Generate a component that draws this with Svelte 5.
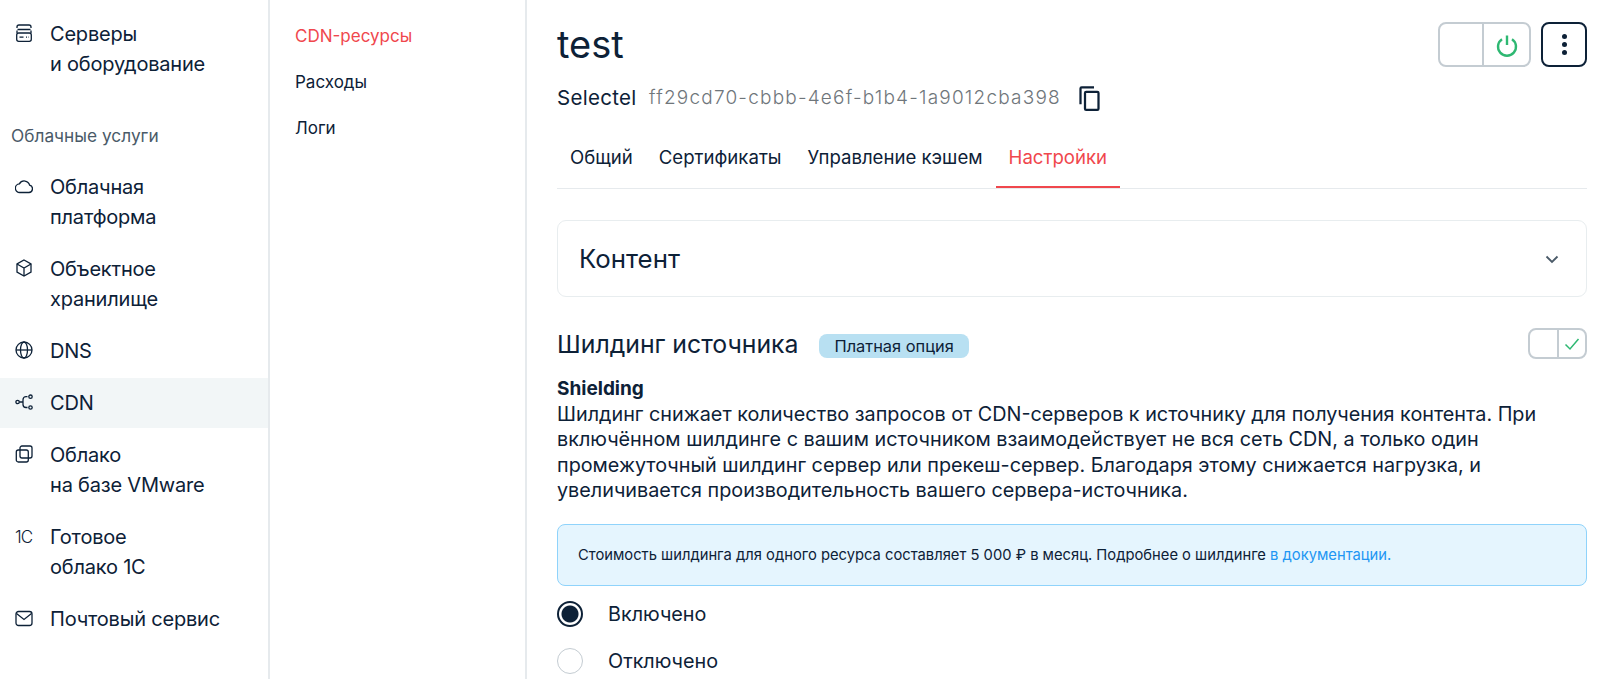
<script>
  const menu = [
    { icon: 'cloud', lines: ['Облачная', 'платформа'] },
    { icon: 'box', lines: ['Объектное', 'хранилище'] },
    { icon: 'globe', lines: ['DNS'] },
    { icon: 'cdn', lines: ['CDN'], active: true },
    { icon: 'vmware', lines: ['Облако', 'на базе VMware'] },
    { icon: '1c', lines: ['Готовое', 'облако 1С'] },
    { icon: 'mail', lines: ['Почтовый сервис'] }
  ];
  const tabs = ['Общий', 'Сертификаты', 'Управление кэшем', 'Настройки'];
  const subnav = ['CDN-ресурсы', 'Расходы', 'Логи'];
</script>

{#snippet icon(name)}
  {#if name === 'server'}
    <svg viewBox="0 0 18 18" class="ico">
      <path d="M2 4V3a2 2 0 0 1 2-2h10a2 2 0 0 1 2 2v1" />
      <path d="M2 9V6.500M16 9V6.500M2.500 5.500h13" />
      <rect x="1.700" y="9" width="14.600" height="8.300" rx="2" />
      <path d="M4.500 13.200h4M11 13.200h1M13.500 13.200h.5" />
    </svg>
  {:else if name === 'cloud'}
    <svg viewBox="0 0 18 18" class="ico">
      <path d="M5 15.500a4.300 4.300 0 0 1-.6-8.600 5.500 5.500 0 0 1 10.200 1.300 3.700 3.700 0 0 1-.6 7.300z" />
    </svg>
  {:else if name === 'box'}
    <svg viewBox="0 0 18 18" class="ico">
      <path d="M9 1l7 4v8l-7 4-7-4V5z" />
      <path d="M2 5l7 4 7-4M9 9v8" />
    </svg>
  {:else if name === 'globe'}
    <svg viewBox="0 0 18 18" class="ico">
      <circle cx="9" cy="9" r="8" />
      <ellipse cx="9" cy="9" rx="3.500" ry="8" />
      <path d="M1 9h16" />
    </svg>
  {:else if name === 'cdn'}
    <svg viewBox="0 0 18 18" class="ico">
      <circle cx="2.600" cy="9" r="1.700" />
      <circle cx="15.500" cy="3.700" r="1.700" />
      <circle cx="15.500" cy="14.500" r="1.700" />
      <path d="M4.300 9h3.700M12.500 3.700h-1.500a3 3 0 0 0-3 3v4.800a3 3 0 0 0 3 3h1.500" />
    </svg>
  {:else if name === 'vmware'}
    <svg viewBox="0 0 18 18" class="ico">
      <rect x="5" y="1" width="12" height="12" rx="2" />
      <rect x="1.300" y="5" width="12" height="12" rx="2" />
    </svg>
  {:else if name === 'mail'}
    <svg viewBox="0 0 18 18" class="ico">
      <rect x="1" y="2.500" width="16" height="14" rx="2.500" />
      <path d="M1.500 4.500L9 10.500l7.500-6" />
    </svg>
  {:else}
    <span class="one-c">1C</span>
  {/if}
{/snippet}

<div class="page">
  <aside class="sidebar">
    <a class="item" href="#s">
      {@render icon('server')}
      <span>Серверы<br />и оборудование</span>
    </a>
    <div class="group">Облачные услуги</div>
    <div class="items">
      {#each menu as m}
        <a class="item" class:active={m.active} href="#m">
          {@render icon(m.icon)}
          <span>
            {#each m.lines as line, i}
              {#if i > 0}<br />{/if}{line}
            {/each}
          </span>
        </a>
      {/each}
    </div>
  </aside>

  <nav class="subnav">
    {#each subnav as s, i}
      <a href="#n" class:current={i === 0}>{s}</a>
    {/each}
  </nav>

  <main class="content">
    <header class="head">
      <h1>test</h1>
      <div class="actions">
        <div class="switch big">
          <span></span>
          <span>
            <svg viewBox="0 0 24 24" width="24" height="24" class="power">
              <path d="M7 6.200a9 9 0 1 0 10 0" />
              <path d="M12 2.500v9.500" />
            </svg>
          </span>
        </div>
        <button class="more" aria-label="Ещё">
          <i></i><i></i><i></i>
        </button>
      </div>
    </header>

    <div class="meta">
      <span class="provider">Selectel</span>
      <span class="uuid">ff29cd70-cbbb-4e6f-b1b4-1a9012cba398</span>
      <svg viewBox="0 0 24 24" width="27" height="27" class="copy">
        <path d="M16 2H5a2 2 0 0 0-2 2v14h2V4h11z" />
        <path fill-rule="evenodd" d="M19 6H9a2 2 0 0 0-2 2v14a2 2 0 0 0 2 2h10a2 2 0 0 0 2-2V8a2 2 0 0 0-2-2zm0 16H9V8h10z" />
      </svg>
    </div>

    <div class="tabs">
      {#each tabs as t, i}
        <a href="#t" class:selected={i === 3}>{t}</a>
      {/each}
    </div>

    <section class="accordion">
      <h2>Контент</h2>
      <svg viewBox="0 0 14 14" width="14" height="14" class="chevron">
        <path d="M1.500 4.500L7 10l5.500-5.500" />
      </svg>
    </section>

    <div class="option-head">
      <h2 class="option-title">Шилдинг источника</h2>
      <span class="badge">Платная опция</span>
      <div class="switch small">
        <span></span>
        <span>
          <svg viewBox="0 0 16 16" width="16" height="16" class="check">
            <path d="M1.500 8.500L6 13 14.500 3" />
          </svg>
        </span>
      </div>
    </div>

    <div class="description">
      <b>Shielding</b>
      <p>Шилдинг снижает количество запросов от CDN-серверов к источнику для получения контента. При включённом шилдинге с вашим источником взаимодействует не вся сеть CDN, а только один промежуточный шилдинг сервер или прекеш-сервер. Благодаря этому снижается нагрузка, и увеличивается производительность вашего сервера-источника.</p>
    </div>

    <div class="notice">
      Стоимость шилдинга для одного ресурса составляет 5 000 ₽ в месяц. Подробнее о шилдинге <a href="#d">в документации.</a>
    </div>

    <div class="radios">
      <label class="radio"><span class="dot on"></span>Включено</label>
      <label class="radio"><span class="dot"></span>Отключено</label>
    </div>
  </main>
</div>

<style>
  :global(body) {
    overflow: hidden;
    background: #fff;
  }

  .page {
    display: flex;
    height: 100vh;
    overflow: hidden;
    font-family: Inter, "Noto Sans", sans-serif;
    color: #0d2137;
  }

  a {
    color: inherit;
    text-decoration: none;
  }

  .sidebar {
    width: 270px;
    flex: none;
    box-sizing: border-box;
    padding-top: 9px;
    border-right: 2px solid #e6eaed;
  }

  .items {
    display: flex;
    flex-direction: column;
    gap: 2px;
  }

  .item {
    display: flex;
    gap: 17px;
    padding: 10px 10px 10px 15px;
    font-size: 20px;
    line-height: 30px;
    letter-spacing: -0.2px;
  }

  .item.active {
    background: #f2f6f7;
  }

  .ico {
    width: 18px;
    height: 18px;
    margin-top: 5px;
    flex: none;
    fill: none;
    stroke: #0d2137;
    stroke-width: 1.300;
  }

  .one-c {
    width: 18px;
    flex: none;
    font-size: 17px;
    font-weight: 300;
    letter-spacing: -1px;
  }

  .group {
    margin: 32px 0 11px 11px;
    height: 30px;
    line-height: 30px;
    font-size: 17.300px;
    color: #4a5a68;
  }

  .subnav {
    width: 257px;
    flex: none;
    box-sizing: border-box;
    padding: 21px 0 0 25px;
    border-right: 2px solid #e6eaed;
    display: flex;
    flex-direction: column;
    gap: 16px;
    font-size: 17px;
    line-height: 30px;
  }

  .subnav .current {
    color: #f0474d;
  }

  .content {
    flex: 1;
    min-width: 0;
    padding: 22px 13px 0 30px;
  }

  .head {
    display: flex;
    justify-content: space-between;
    height: 45px;
  }

  h1 {
    margin: 0;
    font-size: 38px;
    font-weight: 400;
    line-height: 45px;
  }

  .actions {
    display: flex;
    gap: 10px;
  }

  .switch {
    display: grid;
    box-sizing: border-box;
    border: 2px solid #c4ccd2;
  }

  .switch span {
    display: flex;
    align-items: center;
    justify-content: center;
  }

  .switch span:first-child {
    border-right: 2px solid #c4ccd2;
  }

  .big {
    width: 93px;
    height: 45px;
    border-radius: 8px;
    grid-template-columns: 44px 1fr;
  }

  .small {
    width: 59px;
    height: 31px;
    border-radius: 8px;
    grid-template-columns: 29px 1fr;
    margin-left: auto;
  }

  .power {
    fill: none;
    stroke: #2eb872;
    stroke-width: 2.400;
  }

  .check {
    fill: none;
    stroke: #2eb872;
    stroke-width: 1.500;
  }

  .more {
    width: 46px;
    height: 45px;
    padding: 0;
    background: #fff;
    border: 2px solid #0d2137;
    border-radius: 8px;
    display: flex;
    flex-direction: column;
    align-items: center;
    justify-content: center;
    gap: 3px;
  }

  .more i {
    width: 5px;
    height: 5px;
    border-radius: 50%;
    background: #0d2137;
  }

  .meta {
    display: flex;
    align-items: center;
    height: 30px;
    margin-top: 15px;
  }

  .provider {
    width: 92px;
    font-size: 20.500px;
    letter-spacing: 0.3px;
  }

  .uuid {
    color: #6f767b;
    font-size: 19px;
    font-weight: 300;
    letter-spacing: 1.200px;
  }

  .copy {
    margin-left: 15px;
    fill: #0d2137;
  }

  .tabs {
    display: flex;
    height: 76px;
    border-bottom: 1px solid #e6eaed;
    font-size: 18.600px;
  }

  .tabs a {
    padding: 0 13px;
    line-height: 90px;
    height: 74px;
  }

  .tabs .selected {
    color: #f0474d;
    border-bottom: 2px solid #f0474d;
  }

  .accordion {
    display: flex;
    align-items: center;
    justify-content: space-between;
    box-sizing: border-box;
    height: 77px;
    margin-top: 31px;
    padding: 0 27px 0 21px;
    border: 1px solid #e8edef;
    border-radius: 9px;
  }

  h2 {
    margin: 0;
    font-size: 25.800px;
    font-weight: 400;
  }

  .option-title {
    font-size: 24.800px;
  }

  .chevron {
    fill: none;
    stroke: #4a5a68;
    stroke-width: 1.800;
  }

  .option-head {
    display: flex;
    align-items: center;
    margin-top: 31px;
    height: 31px;
  }

  .badge {
    margin-left: 21px;
    margin-top: 4px;
    height: 24px;
    padding: 0 15px;
    line-height: 24px;
    border-radius: 8px;
    background: #b8e0f2;
    font-size: 16.400px;
  }

  .description {
    margin-top: 17px;
    font-size: 19.800px;
    line-height: 25.500px;
  }

  .description b {
    display: block;
    font-size: 19px;
    font-weight: 700;
  }

  .description p {
    margin: 0;
  }

  .notice {
    box-sizing: border-box;
    height: 62px;
    margin-top: 20px;
    padding: 0 20px;
    line-height: 60px;
    border: 1px solid #8fd3fb;
    border-radius: 8px;
    background: #e5f5fe;
    font-size: 14.750px;
  }

  .notice a {
    color: #2196f3;
  }

  .radios {
    display: flex;
    flex-direction: column;
    gap: 21px;
    margin-top: 15px;
  }

  .radio {
    display: flex;
    align-items: center;
    gap: 25px;
    height: 26px;
    font-size: 19.800px;
  }

  .dot {
    box-sizing: border-box;
    width: 26px;
    height: 26px;
    border-radius: 50%;
    border: 1px solid #c4ccd2;
    background: #fff;
  }

  .dot.on {
    border: 2px solid #0d2137;
    background: radial-gradient(circle, #0d2137 0 8px, #fff 9px);
  }
</style>
